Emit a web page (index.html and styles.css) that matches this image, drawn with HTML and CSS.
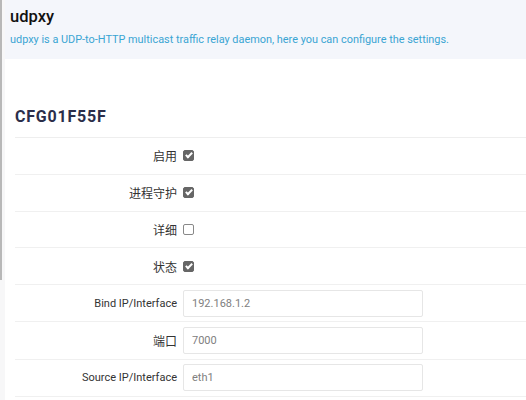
FILE: index.html
```html
<!DOCTYPE html>
<html lang="zh-CN">
<head>
  <meta charset="UTF-8" />
  <meta name="viewport" content="width=device-width, initial-scale=1.0"/>
  <title>udpxy</title>
  <link rel="stylesheet" href="styles.css">
</head>
<body>
  <div class="page">
    <div class="rail"><div class="rail_bar"></div></div>

    <div class="main">
      <div class="cabecalho">
        <h2>udpxy</h2>
        <div class="descricao">udpxy is a UDP-to-HTTP multicast traffic relay daemon, here you can configure the settings.</div>
      </div>

      <div class="secao">
        <h3>CFG01F55F</h3>

        <div class="linha">
          <label>启用</label>
          <span class="caixa marcada"></span>
        </div>
        <div class="linha">
          <label>进程守护</label>
          <span class="caixa marcada"></span>
        </div>
        <div class="linha">
          <label>详细</label>
          <span class="caixa"></span>
        </div>
        <div class="linha">
          <label>状态</label>
          <span class="caixa marcada"></span>
        </div>

        <div class="linha linha_campo">
          <label class="latino">Bind IP/Interface</label>
          <input type="text" value="192.168.1.2">
        </div>
        <div class="linha linha_campo">
          <label>端口</label>
          <input type="text" value="7000">
        </div>
        <div class="linha linha_campo">
          <label class="latino">Source IP/Interface</label>
          <input type="text" value="eth1">
        </div>
      </div>
    </div>
  </div>
</body>
</html>
```

FILE: styles.css
```css
body {
  margin: 0;
  font-family: Roboto, "Noto Sans CJK SC", sans-serif;
  background: #f7f7f8;
  color: #333;
}
.page {
  display: flex;
  min-height: 400px;
}
.rail {
  width: 5px;
  flex-shrink: 0;
}
.rail_bar {
  width: 2px;
  height: 280px;
  background: #b8b8b8;
}
.main {
  flex: 1;
  background: #fff;
}
.cabecalho {
  background: #f4f6fb;
  height: 59px;
  padding: 0 5px;
  box-sizing: border-box;
}
h2 {
  margin: 0;
  padding-top: 4px;
  font-size: 16.5px;
  font-weight: 500;
  color: #111;
  line-height: 26px;
}
.descricao {
  font-size: 10.9px;
  color: #3aa5d3;
  line-height: 16px;
  margin-top: 2px;
}
.secao {
  padding: 0 0 0 10px;
}
h3 {
  margin: 0;
  padding: 48px 0 10px 0;
  font-size: 16px;
  font-weight: 700;
  letter-spacing: 0.8px;
  color: #2b2e4a;
  line-height: 20px;
  border-bottom: 1px solid #eee;
}
.linha {
  display: flex;
  align-items: center;
  height: 35.8px;
  border-bottom: 1px solid #f0f0f0;
}
.linha_campo {
  height: 36.2px;
}
.linha label {
  width: 162px;
  text-align: right;
  padding-right: 6px;
  font-size: 12px;
  color: #333;
}
.linha label.latino {
  font-size: 11px;
}
.caixa {
  width: 9px;
  height: 9px;
  border: 1px solid #888;
  border-radius: 2px;
  background: #fff;
  position: relative;
}
.caixa.marcada {
  background: #666;
  border-color: #666;
}
.caixa.marcada::after {
  content: "";
  position: absolute;
  left: 3px;
  top: 0px;
  width: 2px;
  height: 5px;
  border: solid #fff;
  border-width: 0 2px 2px 0;
  transform: rotate(45deg);
}
input[type="text"] {
  width: 240px;
  height: 27px;
  box-sizing: border-box;
  padding: 0 8px;
  border: 1px solid #e6e6e6;
  border-radius: 2px;
  font-family: Roboto, sans-serif;
  font-size: 11px;
  color: #808080;
}
```
